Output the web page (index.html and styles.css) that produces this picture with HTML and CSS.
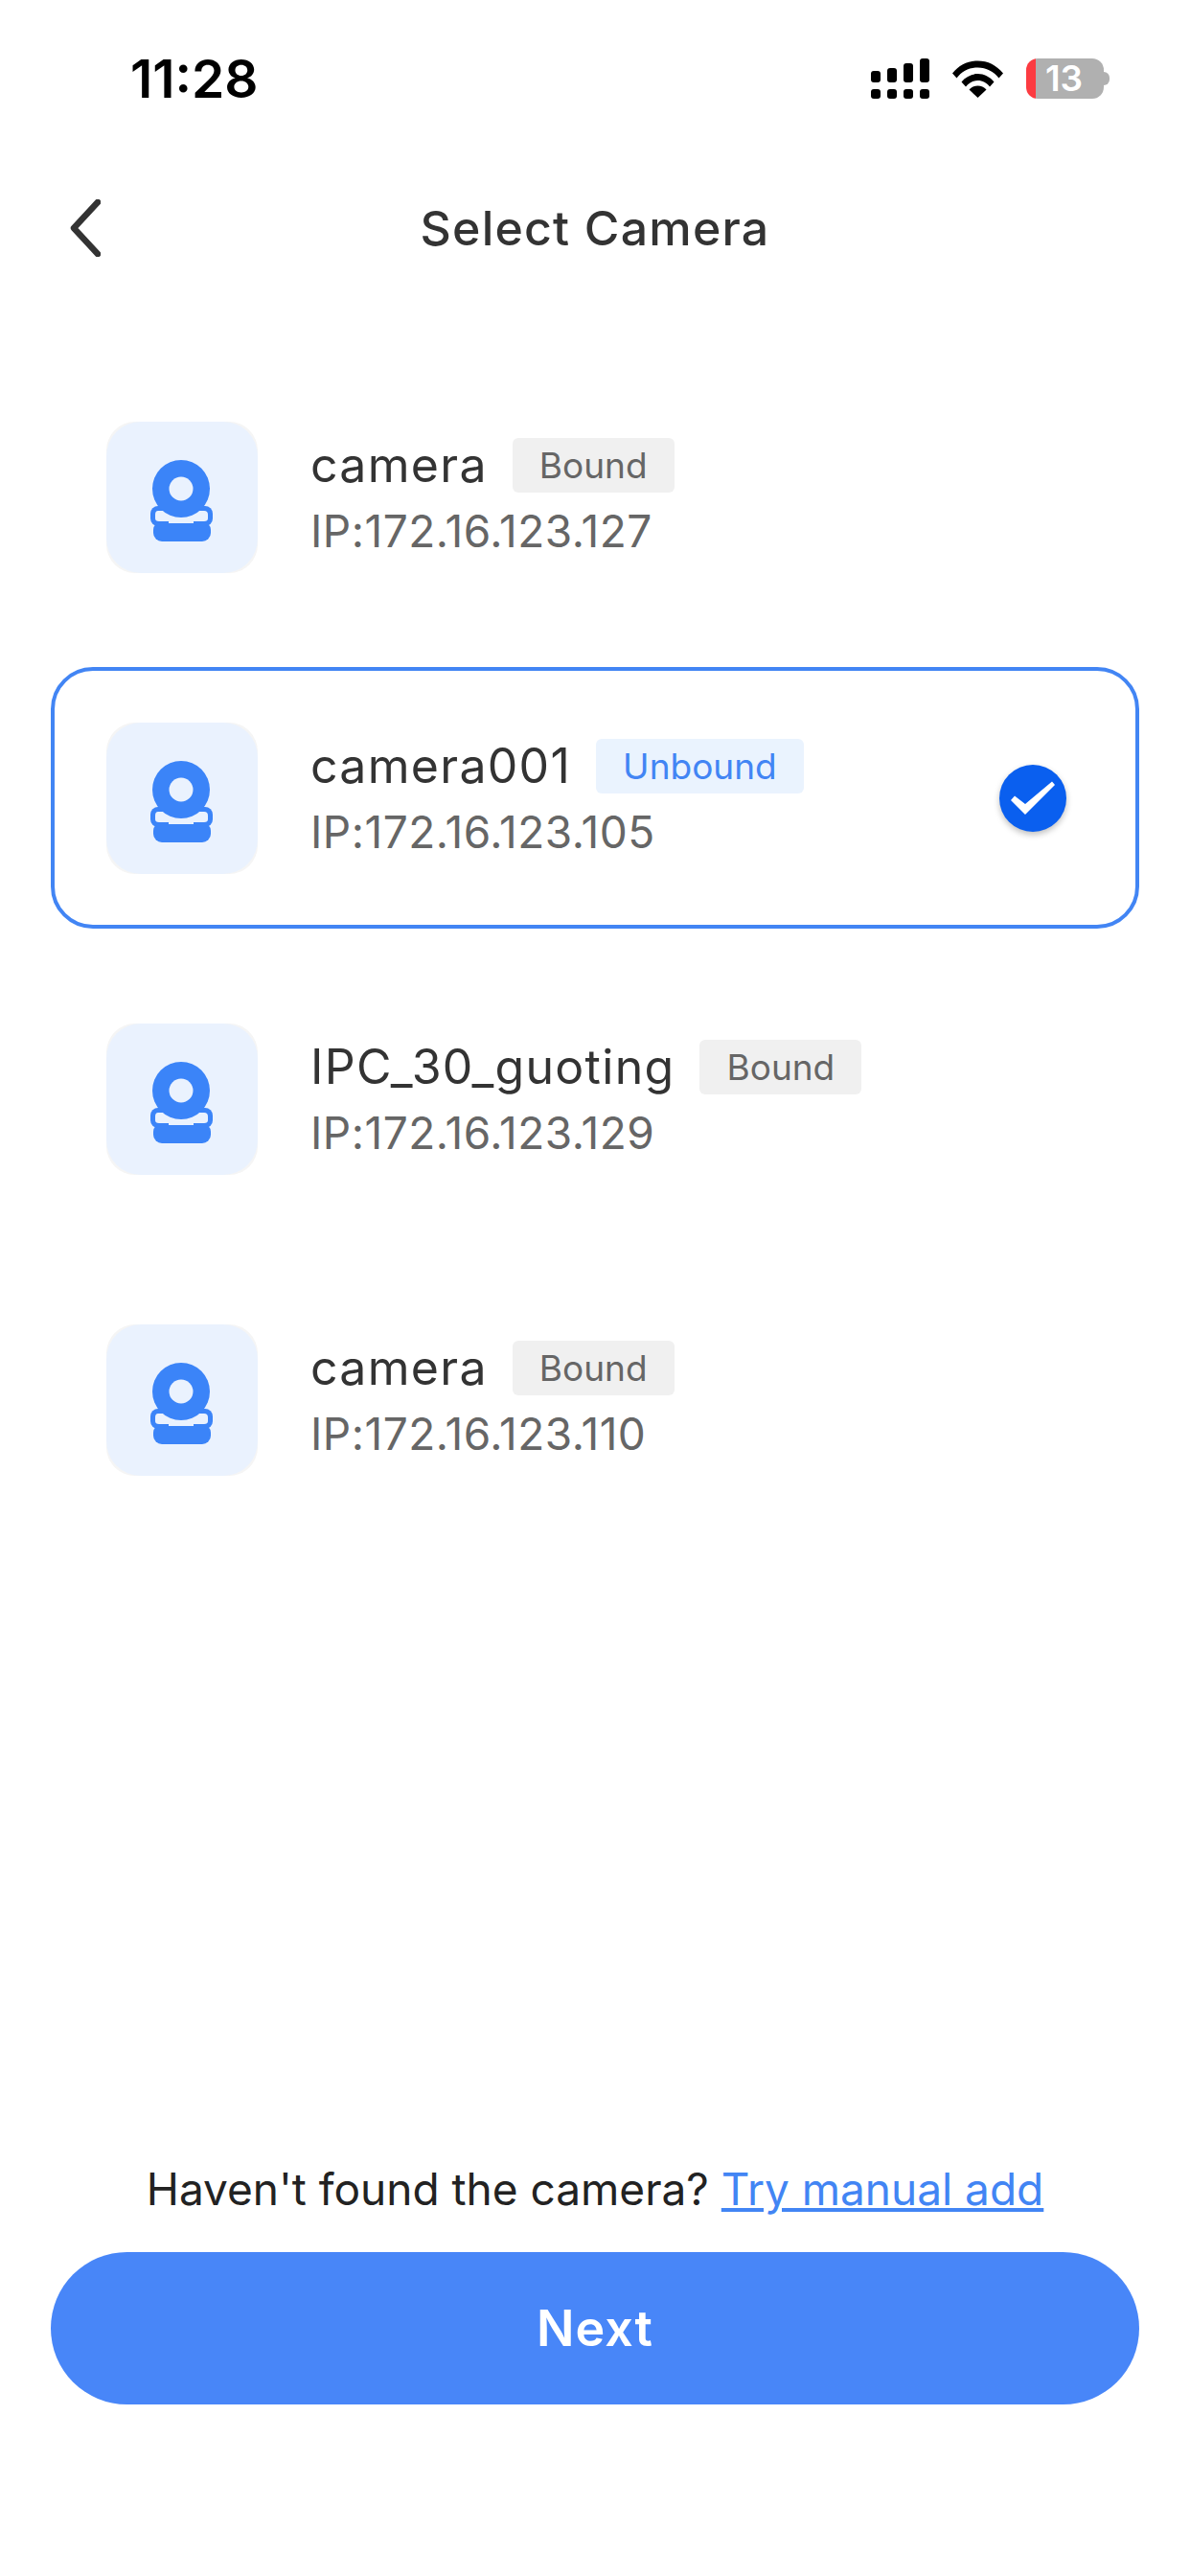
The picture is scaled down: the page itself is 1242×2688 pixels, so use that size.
FILE: index.html
```html
<!DOCTYPE html>
<html lang="en">
<head>
    <meta charset="UTF-8">
    <meta name="viewport" content="width=device-width, initial-scale=1.0">
    <title>Select Camera</title>
    <link rel="stylesheet" href="styles.css">
</head>
<body>

<svg class="sprites" width="0" height="0" aria-hidden="true">
    <symbol id="camera-icon" viewBox="0 0 158 158">
        <rect width="158" height="158" rx="36" fill="#EAF2FE"/>
        <rect x="49" y="104" width="60" height="21" rx="9" fill="#3B84F8"/>
        <rect x="46" y="88" width="65" height="21" rx="8" fill="#3B84F8"/>
        <path d="M54 93H102Q106 93 106 97V101Q106 104 102 104H91V106H65V104H55Q51 104 51 101V97Q51 93 54 93Z" fill="#EAF2FE"/>
        <circle cx="78" cy="70" r="30" fill="#3B84F8"/>
        <circle cx="78" cy="70" r="12.5" fill="#EAF2FE"/>
    </symbol>
</svg>

<div class="status-bar">
    <span class="time">11:28</span>
    <div class="status-icons">
        <svg class="signal" width="61" height="42" viewBox="0 0 61 42">
            <rect x="0" y="13" width="10" height="12" rx="3"/>
            <rect x="17" y="10" width="10" height="15" rx="3"/>
            <rect x="34" y="5" width="10" height="20" rx="3"/>
            <rect x="51" y="0" width="10" height="25" rx="3"/>
            <rect x="0" y="32" width="10" height="10" rx="3"/>
            <rect x="17" y="32" width="10" height="10" rx="3"/>
            <rect x="34" y="32" width="10" height="10" rx="3"/>
            <rect x="51" y="32" width="10" height="10" rx="3"/>
        </svg>
        <svg class="wifi" width="53" height="39" viewBox="0 0 53 39">
            <path d="M0 13.5C7 5 16 0.5 26.5 0.5S46 5 53 13.5L48.5 18.5C43 11.5 35.5 7.5 26.5 7.5S10 11.5 4.500 18.500Z"/>
            <path d="M9.500 22.500C14 17 20 14 26.500 14S39 17 43.500 22.500L39 27.500C36 23.500 31.500 21 26.500 21S17 23.500 14 27.500Z"/>
            <path d="M17.500 30.500C20 27.800 23 26.500 26.500 26.500S33 27.800 35.500 30.500L26.500 39Z"/>
        </svg>
        <div class="battery">
            <div class="battery-body">13</div>
            <div class="battery-tip"></div>
        </div>
    </div>
</div>

<header class="nav-bar">
    <svg class="back" width="32" height="60" viewBox="0 0 32 60">
        <path d="M29 3L4 30L29 57" fill="none" stroke="#333" stroke-width="6.500" stroke-linecap="round" stroke-linejoin="round"/>
    </svg>
    <h1>Select Camera</h1>
</header>

<main class="camera-list">
    <div class="camera-card">
        <svg class="camera-thumb"><use href="#camera-icon"/></svg>
        <div class="camera-info">
            <div class="camera-title">
                <span class="camera-name">camera</span>
                <span class="tag">Bound</span>
            </div>
            <div class="camera-ip">IP:172.16.123.127</div>
        </div>
    </div>

    <div class="camera-card selected">
        <svg class="camera-thumb"><use href="#camera-icon"/></svg>
        <div class="camera-info">
            <div class="camera-title">
                <span class="camera-name">camera001</span>
                <span class="tag tag-unbound">Unbound</span>
            </div>
            <div class="camera-ip">IP:172.16.123.105</div>
        </div>
        <div class="check">
            <svg width="70" height="70" viewBox="0 0 70 70">
                <polygon points="12,37 16,32.500 27,41 55,17.500 58,21 27,52" fill="#fff"/>
            </svg>
        </div>
    </div>

    <div class="camera-card">
        <svg class="camera-thumb"><use href="#camera-icon"/></svg>
        <div class="camera-info">
            <div class="camera-title">
                <span class="camera-name">IPC_30_guoting</span>
                <span class="tag">Bound</span>
            </div>
            <div class="camera-ip">IP:172.16.123.129</div>
        </div>
    </div>

    <div class="camera-card">
        <svg class="camera-thumb"><use href="#camera-icon"/></svg>
        <div class="camera-info">
            <div class="camera-title">
                <span class="camera-name">camera</span>
                <span class="tag">Bound</span>
            </div>
            <div class="camera-ip">IP:172.16.123.110</div>
        </div>
    </div>
</main>

<footer class="bottom">
    <p class="hint">Haven't found the camera? <a href="#manual">Try manual add</a></p>
    <button class="next-btn">Next</button>
</footer>

</body>
</html>
```

FILE: styles.css
```css
* {
    box-sizing: border-box;
}
body {
    font-family: Inter, "Noto Sans", sans-serif;
    margin: 0;
    width: 1242px;
    height: 2688px;
    display: flex;
    flex-direction: column;
    background-color: #fff;
    color: #333;
    overflow: hidden;
}
.sprites {
    display: block;
    height: 0;
}

/* status bar */
.status-bar {
    display: flex;
    justify-content: space-between;
    align-items: center;
    height: 60px;
    margin-top: 52px;
    padding: 0 84px 0 136px;
}
.time {
    font-size: 55px;
    font-weight: 600;
    color: #000;
}
.status-icons {
    display: flex;
    align-items: center;
    gap: 24px;
}
.battery {
    display: flex;
    align-items: center;
}
.battery-body {
    width: 81px;
    height: 42px;
    padding-right: 2px;
    border-radius: 12px;
    background: linear-gradient(to right, #FC3B41 10px, #B0B0B0 10px);
    text-align: center;
    font-size: 37px;
    line-height: 42px;
    font-weight: 600;
    color: #fff;
}
.battery-tip {
    width: 6px;
    height: 14px;
    background-color: #B0B0B0;
    border-radius: 0 7px 7px 0;
}

/* nav */
.nav-bar {
    display: grid;
    grid-template-columns: 1fr auto 1fr;
    align-items: center;
    height: 100px;
    margin-top: 76px;
    padding-left: 73px;
}
.nav-bar h1 {
    grid-column: 2;
    grid-row: 1;
    margin: 0 73px 0 0;
    font-size: 50px;
    font-weight: 500;
    letter-spacing: 1.2px;
    color: #333;
}
.back {
    grid-column: 1;
    grid-row: 1;
}

/* list */
.camera-list {
    display: flex;
    flex-direction: column;
    gap: 41px;
    margin-top: 94px;
    padding: 0 53px;
}
.camera-card {
    display: flex;
    align-items: center;
    gap: 55px;
    height: 273px;
    padding: 0 72px 0 54px;
    border: 4px solid transparent;
    border-radius: 44px;
}
.camera-card.selected {
    border-color: #4285F4;
}
.camera-thumb {
    width: 158px;
    height: 158px;
    flex-shrink: 0;
    background-color: #F5F5F5;
    border-radius: 30px;
}
.camera-info {
    flex: 1;
}
.camera-title {
    display: flex;
    align-items: center;
    gap: 26px;
}
.camera-name {
    font-size: 50px;
    color: #333;
    letter-spacing: 1.3px;
}
.camera-ip {
    margin-top: 11px;
    font-size: 46px;
    letter-spacing: 0.5px;
    color: #666;
}
.tag {
    height: 57px;
    line-height: 57px;
    padding: 0 28px;
    font-size: 37px;
    color: #666;
    background-color: #F0F0F0;
    border-radius: 6px;
}
.tag-unbound {
    color: #4285F4;
    background-color: #EAF3FE;
}
.check {
    width: 70px;
    height: 70px;
    flex-shrink: 0;
    background-color: #0A5FEF;
    border-radius: 50%;
    box-shadow: 0 3px 6px rgba(0, 0, 0, 0.25);
}
.check svg {
    display: block;
}

/* bottom */
.bottom {
    margin-top: auto;
    padding: 0 53px 179px;
}
.hint {
    margin: 0 0 38px;
    text-align: center;
    font-size: 46px;
    color: #222;
}
.hint a {
    color: #4285F4;
    text-decoration: underline;
}
.next-btn {
    display: block;
    width: 100%;
    height: 159px;
    border: none;
    border-radius: 80px;
    background-color: #4886F8;
    color: #fff;
    font-family: inherit;
    font-size: 52px;
    font-weight: 600;
    letter-spacing: 1px;
}
```
